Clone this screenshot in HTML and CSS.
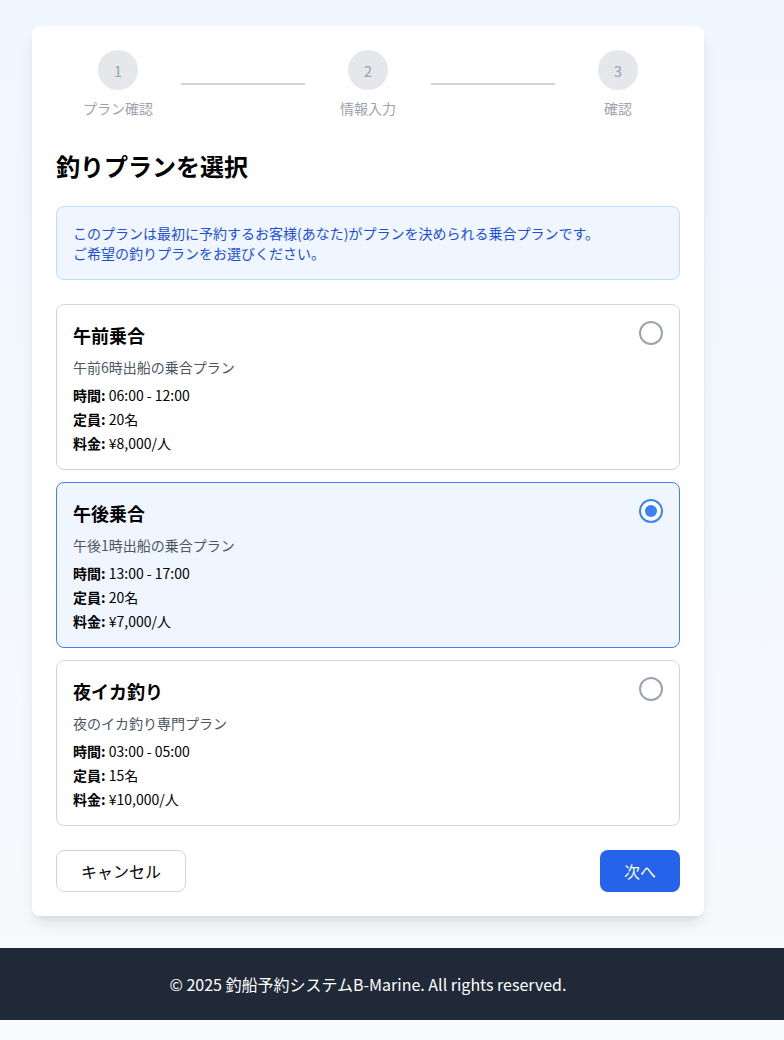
FILE: index.html
```html
<!DOCTYPE html>
<html lang="ja">
<head>
  <meta charset="UTF-8" />
  <meta name="viewport" content="width=device-width, initial-scale=1" />
  <title>釣りプランを選択 | B-Marine</title>
  <link rel="stylesheet" href="styles.css">
</head>
<body>

  <main class="page">
    <section class="panel">

      <div class="stepper">
        <div class="step">
          <span class="step-num">1</span>
          <span class="step-label">プラン確認</span>
        </div>
        <div class="step-line"></div>
        <div class="step">
          <span class="step-num">2</span>
          <span class="step-label">情報入力</span>
        </div>
        <div class="step-line"></div>
        <div class="step">
          <span class="step-num">3</span>
          <span class="step-label">確認</span>
        </div>
      </div>

      <h1 class="title">釣りプランを選択</h1>

      <div class="notice">
        <p>このプランは最初に予約するお客様(あなた)がプランを決められる乗合プランです。</p>
        <p>ご希望の釣りプランをお選びください。</p>
      </div>

      <div class="plans">
        <label class="plan">
          <div class="plan-body">
            <h2 class="plan-name">午前乗合</h2>
            <p class="plan-desc">午前6時出船の乗合プラン</p>
            <ul class="plan-info">
              <li><b>時間:</b> 06:00 - 12:00</li>
              <li><b>定員:</b> 20名</li>
              <li><b>料金:</b> ¥8,000/人</li>
            </ul>
          </div>
          <span class="radio"></span>
        </label>

        <label class="plan selected">
          <div class="plan-body">
            <h2 class="plan-name">午後乗合</h2>
            <p class="plan-desc">午後1時出船の乗合プラン</p>
            <ul class="plan-info">
              <li><b>時間:</b> 13:00 - 17:00</li>
              <li><b>定員:</b> 20名</li>
              <li><b>料金:</b> ¥7,000/人</li>
            </ul>
          </div>
          <span class="radio"></span>
        </label>

        <label class="plan">
          <div class="plan-body">
            <h2 class="plan-name">夜イカ釣り</h2>
            <p class="plan-desc">夜のイカ釣り専門プラン</p>
            <ul class="plan-info">
              <li><b>時間:</b> 03:00 - 05:00</li>
              <li><b>定員:</b> 15名</li>
              <li><b>料金:</b> ¥10,000/人</li>
            </ul>
          </div>
          <span class="radio"></span>
        </label>
      </div>

      <div class="actions">
        <button class="btn btn-cancel">キャンセル</button>
        <button class="btn btn-next">次へ</button>
      </div>

    </section>
  </main>

  <footer class="footer">
    <div class="footer-inner">
      <p>© 2025 釣船予約システムB-Marine. All rights reserved.</p>
    </div>
  </footer>

</body>
</html>
```

FILE: styles.css
```css
:root {
  --color-blue: #2563eb;
  --color-blue-light: #3b82f6;
  --color-blue-bg: #eff6ff;
  --color-border: #d1d5db;
  --color-text: #111827;
  --color-muted: #4b5563;
  --color-step: #9ca3af;
}

* {
  box-sizing: border-box;
}

html {
  background: #f8fafc;
}

body {
  margin: 0;
  min-height: 100vh;
  font-family: "Noto Sans CJK JP", "Noto Sans", sans-serif;
  color: var(--color-text);
  background: linear-gradient(to bottom, #eff6ff, #f8fafc);
}

p,
ul,
h1,
h2 {
  margin: 0;
}

.page {
  padding: 26px 32px 32px;
}

.panel {
  width: 672px;
  background: #fff;
  border-radius: 8px;
  padding: 24px;
  box-shadow: 0 10px 15px -3px rgba(0, 0, 0, 0.1), 0 4px 6px -4px rgba(0, 0, 0, 0.1);
}

/* stepper */
.stepper {
  display: flex;
  align-items: center;
  margin-bottom: 32px;
}

.step {
  width: 124px;
  display: flex;
  flex-direction: column;
  align-items: center;
}

.step-num {
  width: 40px;
  height: 40px;
  border-radius: 50%;
  background: #e5e7eb;
  color: var(--color-step);
  font-size: 15px;
  display: flex;
  align-items: center;
  justify-content: center;
}

.step-label {
  margin-top: 8px;
  font-size: 14px;
  line-height: 20px;
  color: var(--color-step);
}

.step-line {
  flex: 1;
  height: 2px;
  margin: 0 1px;
  background: var(--color-border);
}

.title {
  font-size: 24px;
  line-height: 32px;
  font-weight: 700;
  color: #000;
  margin-bottom: 24px;
}

/* notice */
.notice {
  background: var(--color-blue-bg);
  border: 1px solid #bfdbfe;
  border-radius: 8px;
  padding: 16px;
  font-size: 14px;
  line-height: 20px;
  color: #1d4ed8;
  margin-bottom: 24px;
}

/* plans */
.plans {
  display: flex;
  flex-direction: column;
  gap: 12px;
}

.plan {
  display: flex;
  justify-content: space-between;
  align-items: flex-start;
  border: 1px solid var(--color-border);
  border-radius: 8px;
  padding: 16px;
  cursor: pointer;
}

.plan.selected {
  border-color: var(--color-blue-light);
  background: var(--color-blue-bg);
}

.plan-name {
  font-size: 18px;
  line-height: 28px;
  font-weight: 700;
  color: #000;
  margin-bottom: 8px;
}

.plan-desc {
  font-size: 14px;
  line-height: 20px;
  color: var(--color-muted);
  margin-bottom: 8px;
}

.plan-info {
  list-style: none;
  padding: 0;
  font-size: 14px;
  line-height: 20px;
  color: #000;
  display: flex;
  flex-direction: column;
  gap: 4px;
}

.plan-info b {
  font-weight: 700;
}

.radio {
  width: 24px;
  height: 24px;
  border: 2px solid var(--color-step);
  border-radius: 50%;
  background: #fff;
  flex-shrink: 0;
  display: flex;
  align-items: center;
  justify-content: center;
}

.plan.selected .radio {
  border-color: var(--color-blue-light);
}

.plan.selected .radio::after {
  content: "";
  width: 12px;
  height: 12px;
  border-radius: 50%;
  background: var(--color-blue-light);
}

/* actions */
.actions {
  display: flex;
  justify-content: space-between;
  margin-top: 24px;
}

.btn {
  font-family: inherit;
  font-size: 16px;
  line-height: 24px;
  padding: 9px 24px;
  border: none;
  border-radius: 8px;
  cursor: pointer;
}

.btn-cancel {
  padding: 8px 24px;
  background: #fff;
  border: 1px solid var(--color-border);
  color: #000;
}

.btn-next {
  background: var(--color-blue);
  color: #fff;
}

/* footer */
.footer {
  background: #1f2937;
  color: #fff;
  padding: 24px 32px;
  font-size: 16px;
  line-height: 24px;
}

.footer-inner {
  width: 672px;
  text-align: center;
}
```
